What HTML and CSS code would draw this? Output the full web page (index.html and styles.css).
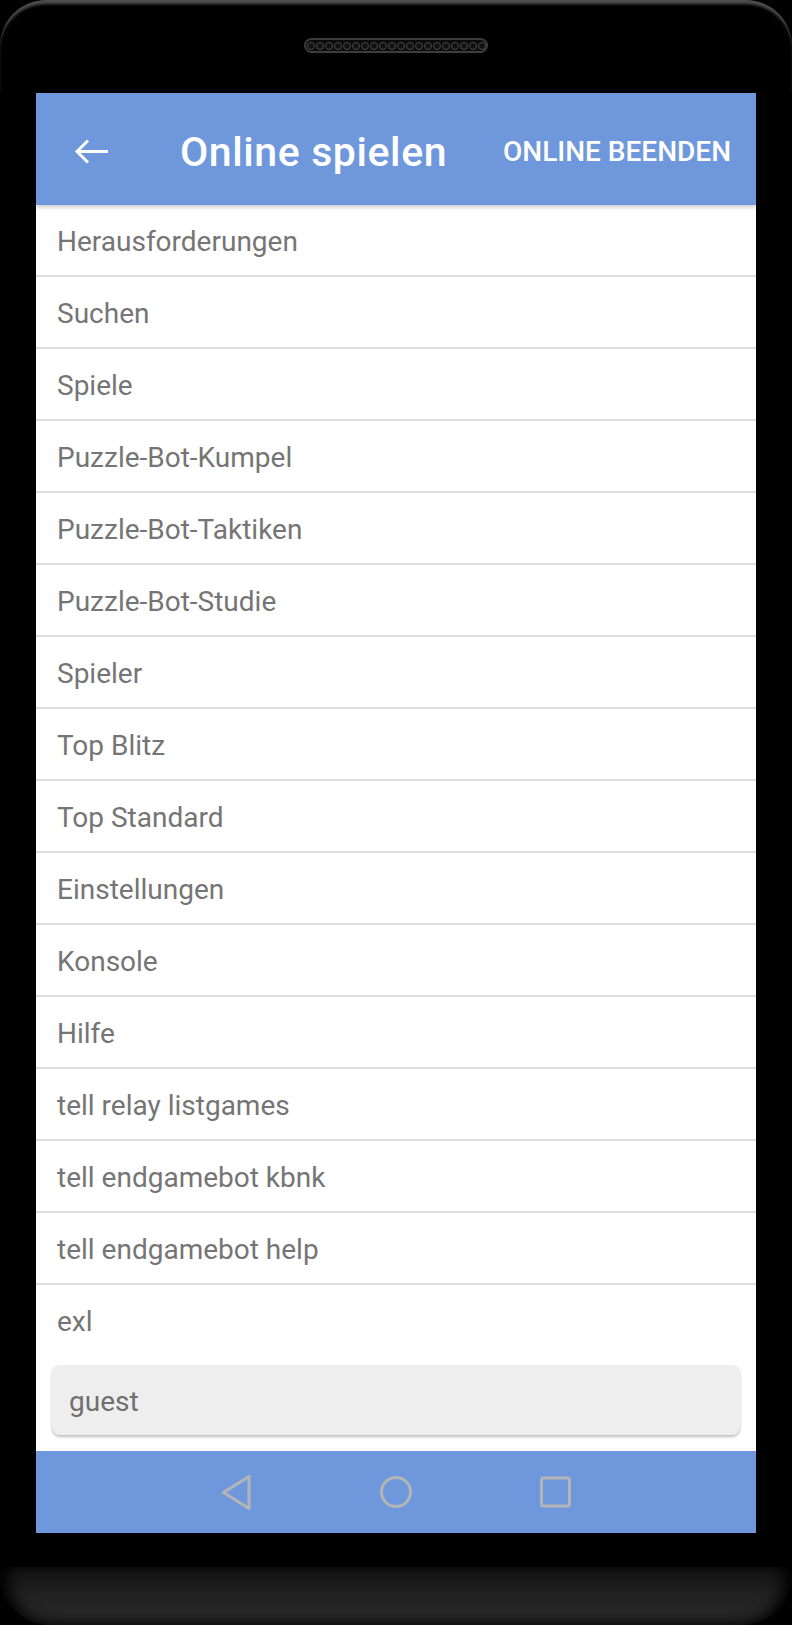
FILE: index.html
```html
<!DOCTYPE html>
<html lang="de">
<head>
    <meta charset="UTF-8">
    <meta name="viewport" content="width=device-width, initial-scale=1.0">
    <title>Online spielen</title>
    <link rel="stylesheet" href="styles.css">
</head>
<body>
    <div class="phone">
        <div class="phone-top">
            <div class="speaker">
                <span></span><span></span><span></span><span></span><span></span>
                <span></span><span></span><span></span><span></span><span></span>
                <span></span><span></span><span></span><span></span><span></span>
                <span></span><span></span><span></span><span></span><span></span>
            </div>
        </div>

        <div class="screen">
            <header class="appbar">
                <svg class="back" width="36" height="26" viewBox="0 0 36 26">
                    <path d="M3 12.5H34M14 1.5L3 12.5L14 23.5" fill="none" stroke="#fff" stroke-width="3"/>
                </svg>
                <div class="title">Online spielen</div>
                <div class="action">ONLINE BEENDEN</div>
            </header>

            <ul class="menu">
                <li>Herausforderungen</li>
                <li>Suchen</li>
                <li>Spiele</li>
                <li>Puzzle-Bot-Kumpel</li>
                <li>Puzzle-Bot-Taktiken</li>
                <li>Puzzle-Bot-Studie</li>
                <li>Spieler</li>
                <li>Top Blitz</li>
                <li>Top Standard</li>
                <li>Einstellungen</li>
                <li>Konsole</li>
                <li>Hilfe</li>
                <li>tell relay listgames</li>
                <li>tell endgamebot kbnk</li>
                <li>tell endgamebot help</li>
                <li>exl</li>
            </ul>

            <div class="user-field">guest</div>

            <nav class="navbar">
                <svg width="48" height="48" viewBox="0 0 48 48">
                    <polygon points="37,8.5 37,40.5 11.5,24.5" fill="none" stroke="#b5b5b5" stroke-width="3" stroke-linejoin="round"/>
                </svg>
                <svg width="48" height="48" viewBox="0 0 48 48">
                    <circle cx="24" cy="24" r="14.5" fill="none" stroke="#b5b5b5" stroke-width="3"/>
                </svg>
                <svg width="48" height="48" viewBox="0 0 48 48">
                    <rect x="9.5" y="10" width="28" height="28" rx="2" fill="none" stroke="#b5b5b5" stroke-width="3"/>
                </svg>
            </nav>
        </div>

        <div class="phone-gap"></div>
        <div class="phone-bottom"></div>
    </div>
</body>
</html>
```

FILE: styles.css
```css
* {
    margin: 0;
    padding: 0;
    box-sizing: border-box;
}

body {
    background: #000;
    font-family: Roboto, "Noto Sans", Arial, sans-serif;
}

.phone {
    width: 792px;
    height: 1625px;
    display: flex;
    flex-direction: column;
}

/* top of the phone body with the speaker */
.phone-top {
    height: 93px;
    border-radius: 46px 46px 0 0;
    background: #000;
    box-shadow: inset 0 5px 3px -1px #4e4e4e;
    padding-top: 38px;
}

.speaker {
    width: 184px;
    height: 15px;
    margin: 0 auto;
    border: 2px solid #3c3c3c;
    border-radius: 8px;
    background: #0c0c0c;
    display: flex;
    align-items: center;
    justify-content: center;
    gap: 1px;
}

.speaker span {
    width: 8px;
    height: 8px;
    border-radius: 50%;
    border: 1px solid #4a4a4a;
    background: #111;
}

.screen {
    margin: 0 36px;
    background: #fff;
    display: flex;
    flex-direction: column;
}

.appbar {
    height: 112px;
    background: #6f98dc;
    display: flex;
    align-items: center;
    padding: 5px 25px 0 38px;
    color: #fff;
    position: relative;
    z-index: 1;
    box-shadow: 0 2px 5px rgba(0, 0, 0, 0.22);
}

.back {
    flex: none;
}

.title {
    flex: 1;
    margin-left: 70px;
    font-size: 41px;
    font-weight: 500;
    letter-spacing: 0.6px;
}

.action {
    font-size: 28px;
    font-weight: 500;
}

.menu {
    list-style: none;
}

.menu li {
    height: 72px;
    padding: 3px 0 0 21px;
    border-bottom: 2px solid #dedede;
    display: flex;
    align-items: center;
    font-size: 28px;
    color: #757575;
}

.menu li:last-child {
    border-bottom-color: transparent;
}

.user-field {
    height: 70px;
    margin: 8px 16px 16px;
    padding: 2px 0 0 17px;
    background: #eee;
    border-radius: 8px;
    box-shadow: 0 2px 3px rgba(0, 0, 0, 0.25);
    display: flex;
    align-items: center;
    font-size: 28px;
    color: #707070;
}

.navbar {
    height: 82px;
    background: #6f98dc;
    display: flex;
    align-items: center;
    justify-content: center;
    gap: 112px;
}

.phone-gap {
    height: 34px;
}

.phone-bottom {
    flex: 1;
    border-radius: 0 0 50px 50px;
    background: linear-gradient(#121212, #222 50%, #262626 80%, #1c1c1c);
    box-shadow: inset 14px 0 16px -6px #000, inset -14px 0 16px -6px #000;
}
```
